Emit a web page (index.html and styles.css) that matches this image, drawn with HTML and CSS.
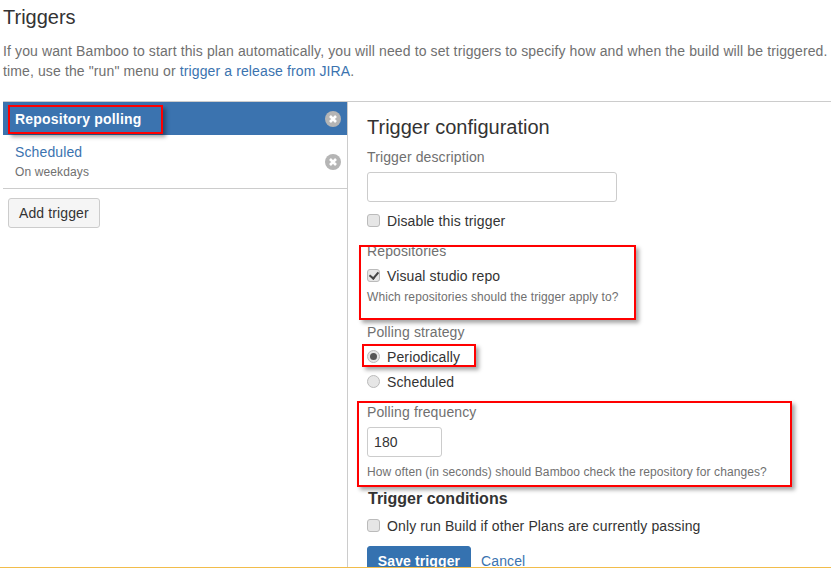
FILE: index.html
```html
<!DOCTYPE html>
<html lang="en">
<head>
    <meta charset="UTF-8">
    <meta name="viewport" content="width=device-width, initial-scale=1.0">
    <title>Triggers</title>
    <link rel="stylesheet" href="styles.css">
</head>
<body>
    <div class="page">
        <h2 class="page-title">Triggers</h2>
        <p class="intro">If you want Bamboo to start this plan automatically, you will need to set triggers to specify how and when the build will be triggered.<br>time, use the "run" menu or <a href="#">trigger a release from JIRA</a>.</p>

        <div class="panel">
            <div class="sidebar">
                <div class="trigger-item active">
                    <span class="trigger-name">Repository polling</span>
                    <svg class="remove" width="16" height="16" viewBox="0 0 16 16"><circle cx="8" cy="8" r="8" fill="#b5b5b5"/><path d="M5 5l6 6M11 5l-6 6" stroke="#fff" stroke-width="2.6"/></svg>
                    <span class="mark mark-polling"></span>
                </div>
                <div class="trigger-item">
                    <div>
                        <a class="trigger-name" href="#">Scheduled</a>
                        <div class="trigger-sub">On weekdays</div>
                    </div>
                    <svg class="remove" width="16" height="16" viewBox="0 0 16 16"><circle cx="8" cy="8" r="8" fill="#b5b5b5"/><path d="M5 5l6 6M11 5l-6 6" stroke="#fff" stroke-width="2.6"/></svg>
                </div>
                <button class="btn add-btn">Add trigger</button>
            </div>

            <div class="config">
                <h3 class="config-title">Trigger configuration</h3>

                <label class="field-label" for="desc">Trigger description</label>
                <input class="text-input" id="desc" type="text">

                <label class="check-row disable-row"><input type="checkbox">Disable this trigger</label>

                <div class="group group-repos">
                    <div class="field-label">Repositories</div>
                    <label class="check-row"><input type="checkbox" checked>Visual studio repo</label>
                    <div class="hint">Which repositories should the trigger apply to?</div>
                    <span class="mark mark-repos"></span>
                </div>

                <div class="group group-strategy">
                    <div class="field-label">Polling strategy</div>
                    <label class="check-row periodically"><input type="radio" name="strategy" checked>Periodically<span class="mark mark-period"></span></label>
                    <label class="check-row"><input type="radio" name="strategy">Scheduled</label>
                </div>

                <div class="group group-frequency">
                    <div class="field-label">Polling frequency</div>
                    <input class="text-input short" type="text" value="180">
                    <div class="hint freq-hint">How often (in seconds) should Bamboo check the repository for changes?</div>
                    <span class="mark mark-frequency"></span>
                </div>

                <h4 class="conditions-title">Trigger conditions</h4>
                <label class="check-row"><input type="checkbox">Only run Build if other Plans are currently passing</label>

                <div class="actions">
                    <button class="btn btn-primary">Save trigger</button>
                    <a href="#">Cancel</a>
                </div>
            </div>
        </div>
    </div>
    <div class="bottom-rule"></div>
</body>
</html>
```

FILE: styles.css
```css
html, body {
    height: 100%;
    margin: 0;
    overflow: hidden;
    background-color: #fff;
}
body {
    font-family: "Liberation Sans", Arial, sans-serif;
    font-size: 14px;
    letter-spacing: 0.12px;
    color: #333;
}
a {
    color: #3b73af;
    text-decoration: none;
}
.page {
    height: 567px;
    overflow: hidden;
    padding-left: 3px;
    box-sizing: border-box;
}
.page-title {
    margin: 5px 0 0;
    font-size: 20px;
    font-weight: normal;
    line-height: 24px;
    letter-spacing: 0;
}
.intro {
    width: 860px;
    margin: 12px 0 0;
    line-height: 20px;
    color: #707070;
    white-space: nowrap;
}
.panel {
    display: flex;
    margin-top: 20px;
    border-top: 1px solid #ccc;
    width: 828px;
}
.sidebar {
    width: 344px;
    flex: none;
    border-right: 1px solid #ccc;
}
.trigger-item {
    position: relative;
    display: flex;
    justify-content: space-between;
    align-items: center;
    padding: 0 6px 0 12px;
    height: 53px;
    border-bottom: 1px solid #ccc;
}
.trigger-item.active {
    height: 33px;
    background-color: #3b73af;
    color: #fff;
    font-weight: bold;
    letter-spacing: 0.2px;
    border-bottom: 0;
}
.trigger-sub {
    margin-top: 5px;
    font-size: 12px;
    color: #707070;
}
.btn {
    font-family: inherit;
    font-size: 14px;
    letter-spacing: inherit;
    height: 30px;
    padding: 0 10px;
    border: 1px solid #ccc;
    border-radius: 3px;
    background-color: #f5f5f5;
    color: #333;
    white-space: nowrap;
}
.add-btn {
    margin: 9px 0 0 5px;
}
.btn-primary {
    width: 104px;
    padding: 0;
    background-color: #3572b0;
    border-color: #3572b0;
    color: #fff;
    font-weight: bold;
}
.config {
    flex: 1;
    padding: 13px 0 0 19px;
}
.config-title {
    margin: 0;
    font-size: 20px;
    font-weight: normal;
    line-height: 24px;
    letter-spacing: 0;
}
.field-label {
    display: block;
    color: #707070;
    line-height: 20px;
}
.config-title + .field-label {
    margin-top: 8px;
}
.text-input {
    display: block;
    width: 250px;
    height: 30px;
    margin-top: 5px;
    padding: 0 5px;
    box-sizing: border-box;
    border: 1px solid #ccc;
    border-radius: 3px;
    font-family: inherit;
    font-size: 14px;
    letter-spacing: inherit;
    color: #333;
}
.text-input.short {
    width: 75px;
    padding-left: 6px;
}
.check-row {
    position: relative;
    display: flex;
    align-items: center;
    height: 20px;
    line-height: 20px;
}
.check-row input {
    position: relative;
    appearance: none;
    box-sizing: border-box;
    width: 13px;
    height: 13px;
    margin: -2px 7px 0 0;
    border: 1px solid #bbb;
    border-radius: 3px;
    background-color: #e6e6e6;
}
.check-row input[type="radio"] {
    border-radius: 50%;
}
.check-row input[type="checkbox"]:checked::before {
    content: "";
    position: absolute;
    left: 3px;
    top: 0;
    width: 4px;
    height: 7px;
    border: solid #444;
    border-width: 0 2.5px 2.5px 0;
    transform: rotate(40deg);
}
.check-row input[type="radio"]:checked::before {
    content: "";
    position: absolute;
    left: 2px;
    top: 2px;
    width: 7px;
    height: 7px;
    border-radius: 50%;
    background-color: #555;
}
.disable-row {
    margin-top: 9px;
}
.group {
    position: relative;
}
.group .check-row {
    margin-top: 5px;
}
.group-repos {
    margin-top: 10px;
}
.group-strategy {
    margin-top: 17px;
}
.group-frequency {
    margin-top: 10px;
}
.hint {
    margin-top: 3px;
    font-size: 12px;
    line-height: 16px;
    letter-spacing: 0.1px;
    color: #707070;
}
.freq-hint {
    margin-top: 7px;
}
.conditions-title {
    margin: 9px 0 0 1px;
    font-size: 16px;
    line-height: 20px;
    letter-spacing: 0;
}
.conditions-title + .check-row {
    margin-top: 7px;
}
.actions {
    display: flex;
    align-items: center;
    gap: 10px;
    margin-top: 10px;
}
.mark {
    position: absolute;
    border: 2px solid #f00;
    box-shadow: 3px 3px 4px rgba(0, 0, 0, 0.35);
    pointer-events: none;
}
.mark-polling {
    left: 5px;
    top: 3px;
    width: 151px;
    height: 25px;
}
.mark-repos {
    left: -8px;
    top: 4px;
    width: 273px;
    height: 71px;
}
.mark-period {
    left: -5px;
    top: -3px;
    width: 110px;
    height: 19px;
}
.mark-frequency {
    left: -10px;
    top: -1px;
    width: 431px;
    height: 82px;
}
.bottom-rule {
    height: 1px;
    background-color: #f2bd4b;
}
```
